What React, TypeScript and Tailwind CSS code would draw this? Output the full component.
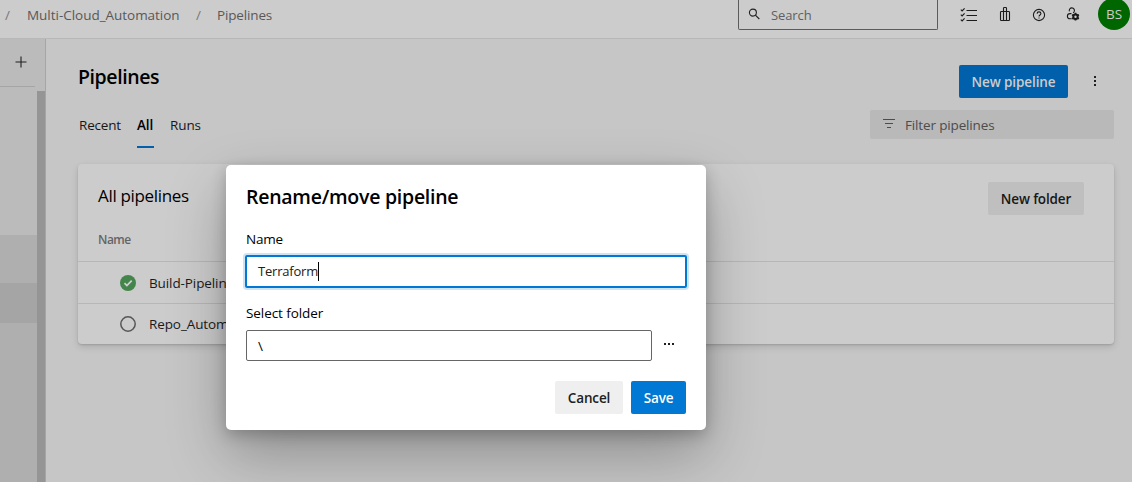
import type { ReactNode } from "react";

function TopBar() {
  return (
    <header className="flex h-[39px] shrink-0 items-start border-b border-[#b8b8b8] bg-[#cccccc] text-[13.5px] text-[#585858]">
      <nav className="flex h-[31px] items-center whitespace-nowrap">
        <span className="w-[27px] pl-[5px] text-[#777777]">/</span>
        <span className="w-[169px] tracking-[-0.03px]">Multi-Cloud_Automation</span>
        <span className="w-[21px] text-[#777777]">/</span>
        <span className="tracking-[-0.15px]">Pipelines</span>
      </nav>
      <div className="ml-auto flex h-[30px] w-[200px] items-center rounded-b-[2px] border border-t-0 border-[#5b5b5b] pl-[9px]">
        <svg width="14" height="14" viewBox="0 0 14 14" fill="none" stroke="#222" strokeWidth="1.1">
          <circle cx="4.9" cy="4.6" r="3.5" />
          <path d="M7.4 7.1 L11.3 11" />
        </svg>
        <span className="mt-[2px] ml-[9px] text-[13px] tracking-[-0.1px] text-[#606060]">Search</span>
      </div>
      <div className="flex h-[30px] w-[194px] items-center pl-[22px] text-[#1b1b1b]">
        <svg width="18" height="16" viewBox="0 0 18 16" fill="none" stroke="currentColor" strokeWidth="1.1">
          <path d="M6.5 3.5H17M6.5 8.5H17M6.5 13.5H17" />
          <path d="M.8 2.7l1.3 1.3L4.6 1.4M.8 7.7l1.3 1.3 2.5-2.6M.8 12.7l1.3 1.3 2.5-2.6" />
        </svg>
        <svg className="-mt-[2px] ml-[21px]" width="12" height="16" viewBox="0 0 12 16" fill="none" stroke="currentColor" strokeWidth="1.1">
          <rect x="1.5" y="5.5" width="9" height="9" rx=".8" />
          <path d="M4.5 14V2.3q0-.8.8-.8h1.4q.8 0 .8.8V14" />
        </svg>
        <svg className="-mt-px ml-[21px]" width="14" height="14" viewBox="0 0 14 14" fill="none" stroke="currentColor" strokeWidth="1.1">
          <circle cx="7" cy="7" r="5.6" />
          <path d="M5.1 5.7q0-1.8 1.9-1.8t1.9 1.7q0 .8-.9 1.4T7 8.5" />
          <path d="M7 9.4v1.1" />
        </svg>
        <svg className="-mt-px ml-[20px]" width="15" height="15" viewBox="0 0 15 15" fill="none" stroke="currentColor" strokeWidth="1.1">
          <path d="M3.4 4.4A2.6 2.6 0 1 1 8.2 4.6L7.3 6M5.5 6.6H4A2.6 2.6 0 0 0 4 11.8h1.7" />
          <circle cx="9.5" cy="9.7" r="2.2" strokeWidth="2" />
          <path d="M9.5 5.8v2M9.5 11.6v2M6.1 7.7l1.8 1M11.1 10.7l1.8 1M6.1 11.7l1.8-1M11.1 8.7l1.8-1" strokeWidth="1.8" />
        </svg>
        <span className="-mt-[2px] ml-[17px] flex size-8 shrink-0 items-center justify-center rounded-full bg-[#006600] text-[13.5px] text-[#cccccc]">
          BS
        </span>
      </div>
    </header>
  );
}

function Sidebar() {
  return (
    <aside className="flex w-[46px] shrink-0 border-r border-[#a5a5a5] bg-[#bbbbbb]">
      <div className="flex w-[37px] flex-col">
        <div className="mr-[2px] flex h-[48px] items-center justify-end border-b border-[#a5a5a5] pr-[8px] pb-[2px]">
          <svg width="12" height="12" viewBox="0 0 12 12" stroke="#202020" strokeWidth="1.1">
            <path d="M6 .5v11M.5 6h11" />
          </svg>
        </div>
        <div className="mt-[148px] h-[48px] bg-[#afafaf]" />
        <div className="h-[40px] bg-[#a5a5a5]" />
        <div className="grow bg-[#afafaf]" />
      </div>
      <div className="mt-[52px] w-[8px] bg-[#959595]" />
    </aside>
  );
}

function PipelineRow({ icon, name }: { icon: ReactNode; name: string }) {
  return (
    <div className="flex items-center border-t border-[#b7b7b7] pl-[42px] text-[13.5px] text-[#1a1a1a]">
      {icon}
      <span className="mt-px ml-[13px] tracking-[-0.1px]">{name}</span>
    </div>
  );
}

function PipelinesPage() {
  return (
    <main className="flex grow flex-col bg-[#c6c6c6] pr-[18px] pl-[32px] text-black">
      <div className="flex h-[71px] items-start pt-[26px]">
        <h1 className="text-[19.5px] leading-[24px] font-semibold tracking-[-0.4px]">Pipelines</h1>
        <button className="ml-auto h-[33px] w-[109px] rounded-[2px] bg-[#0060ab] pt-[2px] text-[13.5px] font-semibold tracking-[-0.1px] text-[#cccccc]">
          New pipeline
        </button>
        <svg className="mt-[10px] mr-[17px] ml-[25px]" width="4" height="12" fill="#1f1f1f">
          <rect x="1" y="1" width="2" height="2" />
          <rect x="1" y="5" width="2" height="2" />
          <rect x="1" y="9" width="2" height="2" />
        </svg>
      </div>
      <div className="flex h-[54px] items-start">
        <div className="flex h-[38px] gap-[16px] pl-[1px] text-[13.5px] leading-[31px] text-[#171717]">
          <span className="w-[42px] tracking-[-0.2px]">Recent</span>
          <span className="w-[17px] border-b-2 border-[#0060ab] font-semibold tracking-[-0.1px] text-black">All</span>
          <span className="tracking-[-0.1px]">Runs</span>
        </div>
        <div className="ml-auto flex h-[29px] w-[244px] items-center rounded-[2px] bg-[#b9b9b9] pl-[13px] text-[#4c4c4c]">
          <svg className="-mt-[2px]" width="12" height="10" viewBox="0 0 12 10" stroke="currentColor">
            <path d="M0 .5h12M2 4.5h8M4 8.5h4" />
          </svg>
          <span className="mt-px ml-[10px] text-[13.5px] tracking-[-0.15px]">Filter pipelines</span>
        </div>
      </div>
      <section className="grid h-[180px] grid-rows-[97px_42px_41px] rounded-[4px] bg-[#cccccc] shadow-[0_3px_7px_rgba(0,0,0,0.13),0_1px_2px_rgba(0,0,0,0.12)]">
        <div className="flex justify-between pr-[30px] pl-[20px]">
          <div className="pt-[20px]">
            <h2 className="text-[17px] leading-[24px] tracking-[-0.33px]">All pipelines</h2>
            <div className="mt-[22px] text-[12px] leading-[20px] font-semibold tracking-[-0.5px] text-[#646464]">Name</div>
          </div>
          <button className="mt-[18px] h-[33px] w-[96px] rounded-[2px] bg-[#bfbfbf] pt-[2px] text-[13.5px] font-semibold tracking-[-0.15px] text-[#171717]">
            New folder
          </button>
        </div>
        <PipelineRow
          name="Build-Pipeline"
          icon={
            <svg width="16" height="16" viewBox="0 0 16 16">
              <circle cx="8" cy="8" r="8" fill="#44854c" />
              <path d="M4.5 8.2l2.4 2.4 4.8-4.9" fill="none" stroke="#d0d0d0" strokeWidth="1.7" />
            </svg>
          }
        />
        <PipelineRow
          name="Repo_Automation"
          icon={
            <svg width="16" height="16" viewBox="0 0 16 16">
              <circle cx="8" cy="8" r="7.2" fill="none" stroke="#565656" strokeWidth="1.5" />
            </svg>
          }
        />
      </section>
    </main>
  );
}

function RenameDialog() {
  return (
    <div
      role="dialog"
      className="absolute top-[165px] left-[226px] flex h-[265px] w-[480px] flex-col rounded-[5px] bg-white px-[20px] pt-[20px] pb-[16px] text-[13.5px] text-black shadow-[0_25px_58px_rgba(0,0,0,0.28),0_5px_15px_rgba(0,0,0,0.22)]"
    >
      <h2 className="text-[19.5px] leading-[24px] font-semibold tracking-[-0.26px]">Rename/move pipeline</h2>
      <label className="mt-[20px] leading-[20px] tracking-[-0.2px]">Name</label>
      <div className="-mx-px mt-[6px] flex h-[33px] items-center rounded-[2px] border-2 border-[#0078d4] pl-[11px] ring-2 ring-[#cce4f6]">
        <span className="mt-px text-[13px] tracking-[-0.2px] text-[#202020]">Terraform</span>
        <span className="h-[19px] w-px bg-black" />
      </div>
      <label className="mt-[15px] leading-[20px] tracking-[-0.08px]">Select folder</label>
      <div className="mt-[7px] flex">
        <div className="flex h-[31px] w-[406px] items-center rounded-[2px] border border-[#666666] pt-[2px] pl-[11px]">\</div>
        <svg className="mt-[12px] ml-[11px]" width="12" height="4" fill="#1f1f1f">
          <rect x="1" y="1" width="2" height="2" />
          <rect x="5" y="1" width="2" height="2" />
          <rect x="9" y="1" width="2" height="2" />
        </svg>
      </div>
      <div className="mt-auto flex justify-end gap-2 font-semibold tracking-[-0.15px]">
        <button className="h-[33px] w-[68px] rounded-[2px] bg-[#efefef] pt-[2px] text-[#202020]">Cancel</button>
        <button className="h-[33px] w-[55px] rounded-[2px] bg-[#0078d4] pt-[2px] text-white">Save</button>
      </div>
    </div>
  );
}

export default function App() {
  return (
    <div className="relative flex h-[482px] w-[1132px] flex-col overflow-hidden font-['Open_Sans','Noto_Sans',sans-serif]">
      <TopBar />
      <div className="flex grow">
        <Sidebar />
        <PipelinesPage />
      </div>
      <RenameDialog />
    </div>
  );
}
